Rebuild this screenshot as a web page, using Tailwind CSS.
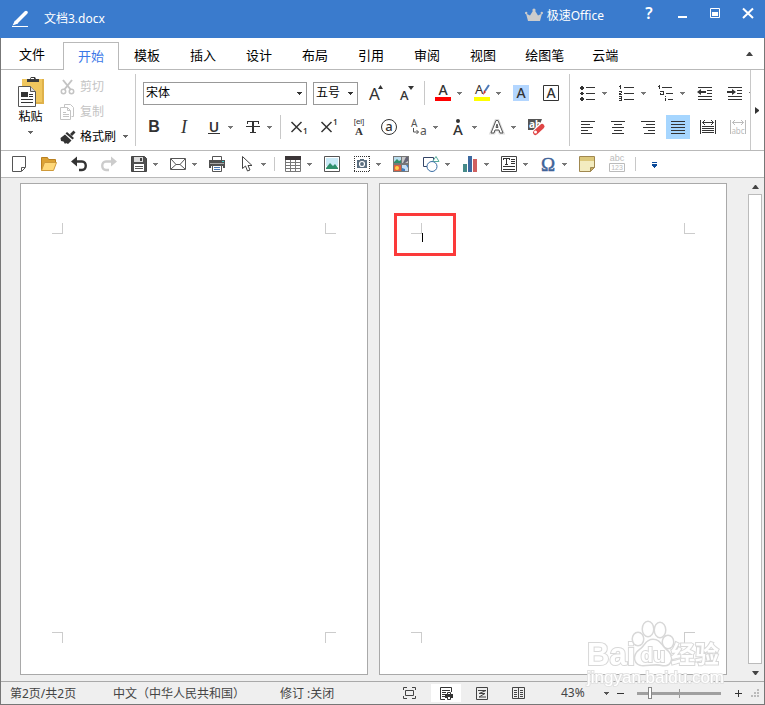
<!DOCTYPE html>
<html lang="zh-CN">

<head>
    <meta charset="UTF-8">
    <meta name="viewport" content="width=device-width, initial-scale=1.0">
    <title>文档3.docx</title>
    <script src="https://cdn.jsdelivr.net/npm/@tailwindcss/browser@4"></script>
</head>

<body class="font-['Noto_Sans','Noto_Sans_CJK_SC',sans-serif] text-xs text-[#333]">
    <!-- shared shapes -->
    <svg class="hidden">
        <symbol id="caret" viewBox="0 0 5 3"><path d="M0 0h5v1H4v1H3v1H2V2H1V1H0z" fill="currentColor" /></symbol>
    </svg>

    <div class="flex flex-col h-screen bg-[#efefef]">
        <!-- title bar -->
        <header class="flex items-center h-[38px] shrink-0 bg-[#3a7bcd] text-white pl-3 pr-[5px]">
            <svg class="w-4 h-[18px]" viewBox="0 0 16 18"><path d="M14 2.500L4.500 12" stroke="#fff" stroke-width="3.500" stroke-linecap="round" /><path d="M3 10.500l3 3L.500 15.500z" fill="#fff" /><path d="M0 16h16v1H0z" fill="#fff" /></svg>
            <h1 class="ml-4 grow">文档3.docx</h1>
            <svg class="w-[18px] h-[14px] mb-2" viewBox="0 0 18 14"><path d="M3 13L1 5.500l4 2L8.500 2h1L13 7.500l4-2L15 13z" fill="#ccc" /><g fill="#ccc"><circle cx="1.200" cy="5" r="1.200" /><circle cx="9" cy="2" r="1.600" /><circle cx="16.800" cy="5" r="1.200" /></g></svg>
            <span class="ml-1 mb-1.5">极速Office</span>
            <div class="flex items-center gap-[9px] ml-[33px] mb-3">
                <button class="w-6 h-6 text-base font-semibold" aria-label="帮助">?</button>
                <button class="w-6 h-6" aria-label="最小化"><svg class="w-6 h-6" viewBox="0 0 24 24"><path d="M8 15h9v2H8z" fill="#fff" /></svg></button>
                <button class="w-6 h-6" aria-label="最大化"><svg class="w-6 h-6" viewBox="0 0 24 24"><path d="M7.500 7.500h9v9h-9z" fill="none" stroke="#fff" /><path d="M9 11h6v4H9z" fill="#fff" /></svg></button>
                <button class="w-6 h-6" aria-label="关闭"><svg class="w-6 h-6" viewBox="0 0 24 24"><path d="M7 7.500l10 9.500M17 7.500L7 17" stroke="#fff" stroke-width="2" /></svg></button>
            </div>
        </header>

        <div class="flex flex-col grow min-h-0 border-x border-b border-[#777]">
            <!-- tabs -->
            <nav class="flex h-8 shrink-0 bg-white text-[13px] text-black">
                <button class="w-[62px] pt-0.5 border-b border-[#b9b9b9]">文件</button>
                <button class="px-[14px] mt-1 border border-b-0 border-[#b9b9b9] text-[#3b78e7]">开始</button>
                <button class="px-[15px] pt-1 border-b border-[#b9b9b9]">模板</button>
                <button class="px-[15px] pt-1 border-b border-[#b9b9b9]">插入</button>
                <button class="px-[15px] pt-1 border-b border-[#b9b9b9]">设计</button>
                <button class="px-[15px] pt-1 border-b border-[#b9b9b9]">布局</button>
                <button class="px-[15px] pt-1 border-b border-[#b9b9b9]">引用</button>
                <button class="px-[15px] pt-1 border-b border-[#b9b9b9]">审阅</button>
                <button class="px-[15px] pt-1 border-b border-[#b9b9b9]">视图</button>
                <button class="px-[14px] pt-1 border-b border-[#b9b9b9]">绘图笔</button>
                <button class="px-[14px] pt-1 border-b border-[#b9b9b9]">云端</button>
                <div class="grow flex justify-end items-center pr-[11px] border-b border-[#b9b9b9]">
                    <button aria-label="折叠功能区"><svg class="w-[7px] h-1" viewBox="0 0 7 4"><path d="M0 4l3-4h1l3 4z" fill="#444" /></svg></button>
                </div>
            </nav>

            <!-- ribbon -->
            <section class="flex h-[81px] shrink-0 bg-white border-b border-[#b9b9b9]">
                <div class="flex w-[134px] shrink-0 pt-1 text-black">
                    <button class="flex flex-col items-center w-[59px] pt-[3px]">
                        <svg class="w-[26px] h-[30px]" viewBox="0 0 26 30"><path d="M4 2h22v25H4z" fill="#f0c75e" /><path d="M24 2h2v25h-8v-2h6z" fill="#dfb14a" /><path d="M9 5V2h3l1-2h4l1 2h3v3z" fill="#3b3b3b" /><path d="M13 1h3v1h-3z" fill="#fff" /><path d="M.500 9.500h12l5 5v15H.500z" fill="#fff" stroke="#555" /><path d="M12.500 9.500v5h5" fill="#ddd" stroke="#555" /><path d="M3 15h7v5H3zM3 22h12v1H3zM3 25h12v1H3zM11 17h4v1h-4zM11 19h4v1h-4z" fill="#333" /></svg>
                        <span class="leading-5">粘贴</span>
                        <svg class="w-[5px] h-[3px] mt-1 text-[#666]"><use href="#caret" /></svg>
                    </button>
                    <div class="flex flex-col">
                        <button class="flex items-center h-[25px] text-[#c4c4c4]">
                            <svg class="w-4 h-4 mr-1" viewBox="0 0 16 16" fill="none" stroke="#c4c4c4" stroke-width="2"><path d="M3 1l8 10M12 1L4 11" /><circle cx="3.500" cy="12.500" r="2.200" stroke-width="1.500" /><circle cx="11.500" cy="12.500" r="2.200" stroke-width="1.500" /></svg>剪切</button>
                        <button class="flex items-center h-[25px] text-[#c4c4c4]">
                            <svg class="w-4 h-4 mr-1" viewBox="0 0 16 16" fill="none" stroke="#c4c4c4"><path d="M4.500 3V.500h6l3 3v9h-2" /><path d="M.500 3.500h7l3 3v9H.500z" fill="#fff" /><path d="M7.500 3.500v3h3M3 8.500h3M3 10.500h6M3 12.500h6" /></svg>复制</button>
                        <button class="flex items-center h-[25px]">
                            <svg class="w-4 h-4 mr-1" viewBox="0 0 16 16" fill="#333"><path d="M10 5l3.500-3.500 2 2L12 7zM7 3l7 6-1.500 1.500L5.500 4.500zM5 5.500l6.500 6L8 15l-2-1-1 1-1.500-2.500L1 12 .500 9z" /></svg>格式刷
                            <svg class="w-[5px] h-[3px] ml-[7px] text-[#666]"><use href="#caret" /></svg></button>
                    </div>
                </div>

                <div class="w-px h-[72px] mt-1 bg-[#c8c8c8] shrink-0"></div>

                <!-- font -->
                <div class="flex flex-col gap-[10px] w-[433px] shrink-0 pt-[11px] pl-1.5 text-[#333]">
                    <div class="flex gap-1.5 items-center pl-px">
                        <div class="relative">
                            <select aria-label="字体" class="appearance-none block w-[164px] h-[23px] pl-0.5 border border-[#999] bg-white text-black"><option>宋体</option></select>
                            <svg class="absolute right-[5px] top-[10px] w-[5px] h-[3px] pointer-events-none"><use href="#caret" /></svg>
                        </div>
                        <div class="relative">
                            <select aria-label="字号" class="appearance-none block w-[45px] h-[23px] pl-0.5 border border-[#999] bg-white text-black"><option>五号</option></select>
                            <svg class="absolute right-[5px] top-[10px] w-[5px] h-[3px] pointer-events-none"><use href="#caret" /></svg>
                        </div>
                        <button class="w-6 h-6" aria-label="增大字号"><svg class="w-6 h-6" viewBox="0 0 24 24" fill="#333"><text x="5" y="19" font-size="17">A</text><path d="M14 8l2.500-4L19 8z" /></svg></button>
                        <button class="w-6 h-6" aria-label="减小字号"><svg class="w-6 h-6" viewBox="0 0 24 24" fill="#333"><text x="6" y="19" font-size="13" font-weight="500">A</text><path d="M14 5h6l-3 4z" /></svg></button>
                        <div class="w-px h-6 bg-[#c8c8c8]"></div>
                        <button class="flex items-center" aria-label="字体颜色"><svg class="w-6 h-6" viewBox="0 0 24 24" fill="#333"><text x="12" y="14" font-size="14" font-weight="500" text-anchor="middle">A</text><path d="M4 16h16v4H4z" fill="#f00" /></svg><svg class="w-[5px] h-[3px] mx-0.5 text-[#777]"><use href="#caret" /></svg></button>
                        <button class="flex items-center" aria-label="突出显示"><svg class="w-6 h-6" viewBox="0 0 24 24" fill="#333"><text x="5" y="13" font-size="13">A</text><path d="M19 4l-4 6" stroke="#4a78b8" stroke-width="2" /><path d="M14 9l2 2-3 3z" fill="#c33" /><path d="M4 16h16v4H4z" fill="#ff0" /></svg><svg class="w-[5px] h-[3px] mx-0.5 text-[#777]"><use href="#caret" /></svg></button>
                        <button class="w-6 h-6" aria-label="字符底纹"><svg class="w-6 h-6" viewBox="0 0 24 24" fill="#333"><path d="M4 4h16v16H4z" fill="#b3d6ff" /><text x="12" y="17" font-size="14" font-weight="500" text-anchor="middle">A</text></svg></button>
                        <button class="w-6 h-6" aria-label="字符边框"><svg class="w-6 h-6" viewBox="0 0 24 24" fill="#333"><path d="M4.500 4.500h15v15h-15z" fill="none" stroke="#333" /><text x="12" y="17" font-size="14" font-weight="500" text-anchor="middle">A</text></svg></button>
                    </div>
                    <div class="flex gap-1.5 items-center">
                        <button class="w-6 h-6 font-['Liberation_Sans',sans-serif] text-base leading-6 font-bold" aria-label="加粗">B</button>
                        <button class="w-6 h-6 font-['Liberation_Serif',serif] text-lg leading-6 italic" aria-label="倾斜">I</button>
                        <button class="flex items-center" aria-label="下划线"><svg class="w-6 h-6" viewBox="0 0 24 24" fill="#333"><text x="12" y="17" font-size="14" font-weight="600" text-anchor="middle">U</text><path d="M6 18h12v1H6z" /></svg><svg class="w-[5px] h-[3px] mx-0.5 text-[#777]"><use href="#caret" /></svg></button>
                        <button class="flex items-center" aria-label="删除线"><svg class="w-6 h-6" viewBox="0 0 24 24" fill="#333"><path d="M6 6h12v3h-1V7h-4v10h2v1H9v-1h2V7H7v2H6zM5 11h14v1H5z" /></svg><svg class="w-[5px] h-[3px] mx-0.5 text-[#777]"><use href="#caret" /></svg></button>
                        <div class="w-px h-6 bg-[#c8c8c8]"></div>
                        <button class="w-6 h-6" aria-label="下标"><svg class="w-6 h-6" viewBox="0 0 24 24" fill="#333"><path d="M4.500 7l10 10M14.500 7l-10 10" stroke="#333" stroke-width="1.500" /><text x="16" y="19" font-size="8" font-weight="600">1</text></svg></button>
                        <button class="w-6 h-6" aria-label="上标"><svg class="w-6 h-6" viewBox="0 0 24 24" fill="#333"><path d="M4.500 7l10 10M14.500 7l-10 10" stroke="#333" stroke-width="1.500" /><text x="16" y="10" font-size="8" font-weight="600">1</text></svg></button>
                        <button class="w-6 h-6" aria-label="拼音指南"><svg class="w-6 h-6" viewBox="0 0 24 24" fill="#333"><text x="12" y="9" font-size="8" text-anchor="middle" font-family="Liberation Sans">[ei]</text><text x="12" y="20" font-size="11" font-weight="bold" font-family="Liberation Serif" text-anchor="middle">A</text></svg></button>
                        <button class="w-6 h-6" aria-label="带圈字符"><svg class="w-6 h-6" viewBox="0 0 24 24" fill="#333"><circle cx="12" cy="12" r="7.500" fill="none" stroke="#333" /><text x="12" y="16" font-size="13" font-weight="500" text-anchor="middle">a</text></svg></button>
                        <button class="flex items-center" aria-label="更改大小写"><svg class="w-6 h-6" viewBox="0 0 24 24" fill="#555"><text x="4" y="12" font-size="10">A</text><text x="13" y="20" font-size="12">a</text><path d="M6.500 13v4h5M9.500 15l2 2-2 2" fill="none" stroke="#555" /></svg><svg class="w-[5px] h-[3px] mx-0.5 text-[#777]"><use href="#caret" /></svg></button>
                        <button class="flex items-center" aria-label="着重号"><svg class="w-6 h-6" viewBox="0 0 24 24" fill="#333"><circle cx="12" cy="6" r="2" /><text x="12" y="20" font-size="15" font-weight="500" text-anchor="middle">A</text></svg><svg class="w-[5px] h-[3px] mx-0.5 text-[#777]"><use href="#caret" /></svg></button>
                        <button class="flex items-center" aria-label="文本效果"><svg class="w-6 h-6" viewBox="0 0 24 24"><path d="M6 18l5-12.500h2L18 18h-3l-1-3h-4l-1 3zM11 12.500h2L12 9z" fill="#fff" stroke="#ddd" stroke-width="3" /><path d="M6 18l5-12.500h2L18 18h-3l-1-3h-4l-1 3zM11 12.500h2L12 9z" fill="#fff" stroke="#555" /></svg><svg class="w-[5px] h-[3px] mx-0.5 text-[#777]"><use href="#caret" /></svg></button>
                        <button class="w-6 h-6" aria-label="清除格式"><svg class="w-6 h-6" viewBox="0 0 24 24"><path d="M4 4h14l-2 5-6 6H4z" fill="#555" /><text x="5" y="13" font-size="10" font-weight="bold" fill="#fff">ab</text><path d="M11.500 17.500l6-6" stroke="#fff" stroke-width="7" stroke-linecap="round" /><path d="M11.500 17.500l6.500-6" stroke="#e04545" stroke-width="5" stroke-linecap="round" /><circle cx="11.500" cy="17" r="1.500" fill="#fff" /></svg></button>
                    </div>
                </div>

                <div class="w-px h-[72px] mt-1 bg-[#c8c8c8] shrink-0"></div>

                <!-- paragraph -->
                <div class="flex flex-col gap-[10px] grow min-w-0 overflow-hidden pt-[11px] pl-1.5 text-[#333]">
                    <div class="flex gap-1.5 items-center">
                        <button class="flex items-center" aria-label="项目符号"><svg class="w-6 h-6" viewBox="0 0 24 24" fill="#333"><path d="M5 5h2v1h1v2H7v1H5V8H4V6h1zM5 11h2v1h1v1H7v1H5v-1H4v-1h1zM5 16h2v1h1v2H7v1H5v-1H4v-2h1zM10 6h9v1h-9zM10 12h9v1h-9zM10 18h9v1h-9z" /></svg><svg class="w-[5px] h-[3px] mx-0.5 text-[#777] shrink-0"><use href="#caret" /></svg></button>
                        <button class="flex items-center" aria-label="编号"><svg class="w-6 h-6" viewBox="0 0 24 24" fill="#333"><path d="M9 6h10v1H9zM9 12h10v1H9zM9 18h10v1H9zM5 4h1v4H5zM4 5h1v1H4zM4 10h3v2H6v1h1v1H4v-2h2v-1H4zM4 15h3v5H4v-1h2v-1H4v-1h2v-1H4z" /></svg><svg class="w-[5px] h-[3px] mx-0.5 text-[#777] shrink-0"><use href="#caret" /></svg></button>
                        <button class="flex items-center" aria-label="多级列表"><svg class="w-6 h-6" viewBox="0 0 24 24" fill="#333"><path d="M5 4h1v4H5zM4 5h1v1H4zM8 6h10v1H8zM6 10h4v4H6v-2h3v-1H6zM7 12v1h2v-1zM12 12h7v1h-7zM11 15h1v1h-1zM11 17h1v3h-1zM14 18h5v1h-5z" /></svg><svg class="w-[5px] h-[3px] mx-0.5 text-[#777] shrink-0"><use href="#caret" /></svg></button>
                        <button class="w-6 h-6 shrink-0" aria-label="减少缩进"><svg class="w-6 h-6" viewBox="0 0 24 24" fill="#333"><path d="M5 6h14v1H5zM14 9h5v1h-5zM14 12h5v1h-5zM5 15h14v1H5zM5 18h14v1H5zM4 11l4-3v2h5v2H8v2z" /></svg></button>
                        <button class="flex items-center shrink-0" aria-label="增加缩进"><svg class="w-6 h-6" viewBox="0 0 24 24" fill="#333"><path d="M5 6h14v1H5zM14 9h5v1h-5zM14 12h5v1h-5zM5 15h14v1H5zM5 18h14v1H5zM13 11L9 8v2H4v2h5v2z" /></svg><svg class="w-[5px] h-[3px] mx-0.5 text-[#777] shrink-0"><use href="#caret" /></svg></button>
                    </div>
                    <div class="flex gap-1.5 items-center">
                        <button class="w-6 h-6 shrink-0" aria-label="左对齐"><svg class="w-6 h-6" viewBox="0 0 24 24"><path d="M5 6h14v1H5zM5 9h9v1H5zM5 12h12v1H5zM5 15h7v1H5zM5 18h11v1H5z" fill="#333" /></svg></button>
                        <button class="w-6 h-6 shrink-0" aria-label="居中"><svg class="w-6 h-6" viewBox="0 0 24 24"><path d="M5 6h14v1H5zM8 9h8v1H8zM6 12h12v1H6zM8 15h8v1H8zM6 18h12v1H6z" fill="#333" /></svg></button>
                        <button class="w-6 h-6 shrink-0" aria-label="右对齐"><svg class="w-6 h-6" viewBox="0 0 24 24"><path d="M5 6h14v1H5zM10 9h9v1h-9zM7 12h12v1H7zM12 15h7v1h-7zM8 18h11v1H8z" fill="#333" /></svg></button>
                        <button class="w-6 h-6 shrink-0 bg-[#a6d6ff]" aria-label="两端对齐" aria-pressed="true"><svg class="w-6 h-6" viewBox="0 0 24 24"><path d="M5 6h14v1H5zM5 9h14v1H5zM5 12h14v1H5zM5 15h14v1H5zM5 18h14v1H5z" fill="#333" /></svg></button>
                        <button class="w-6 h-6 shrink-0" aria-label="分散对齐"><svg class="w-6 h-6" viewBox="0 0 24 24" fill="#333"><path d="M4 5h1v14H4zM19 5h1v14h-1zM6 11h12v1H6zM6 13h12v1H6zM6 15h12v1H6zM6 17h12v1H6z" /><path d="M6.500 7.500h11M9 5L6.500 7.500 9 10M15 5l2.500 2.500L15 10" fill="none" stroke="#333" /></svg></button>
                        <button class="w-6 h-6 shrink-0" aria-label="字符缩放"><svg class="w-6 h-6" viewBox="0 0 24 24" fill="#bbb"><path d="M4 5h1v14H4zM19 5h1v14h-1z" /><path d="M6.500 7.500h11M9 5L6.500 7.500 9 10M15 5l2.500 2.500L15 10" fill="none" stroke="#bbb" /><text x="12" y="19" font-size="8" text-anchor="middle">abc</text></svg></button>
                    </div>
                </div>
                <button class="flex items-center w-[14px] shrink-0 pl-1 border-l border-[#c8c8c8]" aria-label="向右滚动"><svg class="w-[5px] h-[7px]" viewBox="0 0 5 7"><path d="M0 0v7l4-3V3z" fill="#333" /></svg></button>
            </section>

            <!-- quick access -->
            <section class="flex gap-1.5 items-center h-[27px] shrink-0 pl-1.5 bg-white border-b border-[#b9b9b9] text-[#777]">
                <button class="w-6 h-6" aria-label="新建"><svg class="w-6 h-6" viewBox="0 0 24 24"><path d="M5.500 4.500h13v11l-4 4h-9z" fill="#fff" stroke="#555" /><path d="M18 15.500h-3.500V19" fill="none" stroke="#555" /></svg></button>
                <button class="w-6 h-6" aria-label="打开"><svg class="w-6 h-6" viewBox="0 0 24 24"><path d="M4.500 18.500v-13h6l1 2h7v3" fill="#dca234" stroke="#b98020" /><path d="M4.500 18.500l3-8h12l-3 8z" fill="#ffd97a" stroke="#cf9a3a" /></svg></button>
                <button class="w-6 h-6" aria-label="撤销"><svg class="w-6 h-6" viewBox="0 0 24 24"><path d="M7 9.500h8c5 0 5 8.500 0 8.500h-3" fill="none" stroke="#333" stroke-width="2.400" /><path d="M4 9.500l6-5v10z" fill="#333" /></svg></button>
                <button class="w-6 h-6" aria-label="恢复"><svg class="w-6 h-6" viewBox="0 0 24 24"><path d="M17 9.500H9c-5 0-5 8.500 0 8.500h3" fill="none" stroke="#ccc" stroke-width="2.400" /><path d="M20 9.500l-6-5v10z" fill="#ccc" /></svg></button>
                <button class="flex items-center" aria-label="保存"><svg class="w-6 h-6" viewBox="0 0 24 24"><path d="M4.500 4.500h13l2 2v13h-15z" fill="#505050" stroke="#444" /><path d="M7 5h9v5H7z" fill="#ddd" /><path d="M13 6h2v3h-2z" fill="#444" /><path d="M7 12h10v7H7z" fill="#fff" /><path d="M8 14h8v1H8zM8 16h8v1H8z" fill="#555" /></svg><svg class="w-[5px] h-[3px] mx-0.5"><use href="#caret" /></svg></button>
                <button class="flex items-center" aria-label="邮件"><svg class="w-6 h-6" viewBox="0 0 24 24" fill="none" stroke="#555"><path d="M4.500 6.500h15v11h-15zM5 7l5 5.500h4L19 7M5 17l5-4.500M19 17l-5-4.500" /></svg><svg class="w-[5px] h-[3px] mx-0.5"><use href="#caret" /></svg></button>
                <button class="w-6 h-6" aria-label="打印"><svg class="w-6 h-6" viewBox="0 0 24 24"><path d="M7.500 4.500h9v4h-9z" fill="#fff" stroke="#555" /><path d="M4 8h16v8h-2v-2H6v2H4z" fill="#505050" /><path d="M5 11h14v1H5z" fill="#aaa" /><path d="M17 9h2v1h-2z" fill="#3cc" /><path d="M7.500 13.500h9v6h-9z" fill="#fff" stroke="#555" /><path d="M9 15h6v1H9zM9 17h6v1H9z" fill="#4a7ab8" /></svg></button>
                <button class="flex items-center" aria-label="选择"><svg class="w-6 h-6" viewBox="0 0 24 24"><path d="M7.500 4.500v12l3-2.500 2 5 2.500-1-2-4.500h4z" fill="#fff" stroke="#444" /></svg><svg class="w-[5px] h-[3px] mx-0.5"><use href="#caret" /></svg></button>
                <div class="w-px h-3.5 bg-[#c8c8c8]"></div>
                <button class="flex items-center" aria-label="表格"><svg class="w-6 h-6" viewBox="0 0 24 24"><path d="M4.500 4.500h15v15h-15zM9.500 8v11M14.500 8v11M5 10.500h14M5 13.500h14M5 16.500h14" fill="none" stroke="#777" /><path d="M4 4h16v4H4z" fill="#3b3537" /></svg><svg class="w-[5px] h-[3px] mx-0.5"><use href="#caret" /></svg></button>
                <button class="w-6 h-6" aria-label="图片"><svg class="w-6 h-6" viewBox="0 0 24 24"><path d="M4.500 4.500h15v15h-15z" fill="#fff" stroke="#555" /><path d="M6 6h12v8H6z" fill="#c9e9f6" /><path d="M6 16l4-5 3 3 2-2 3 4v1H6z" fill="#2e8f6c" /></svg></button>
                <button class="flex items-center" aria-label="屏幕截图"><svg class="w-6 h-6" viewBox="0 0 24 24"><path d="M4 4.500h16M4 19.500h16M4.500 4v16M19.500 4v16" fill="none" stroke="#333" stroke-dasharray="1 1" /><path d="M7 8h3V7h4v1h3v8H7z" fill="#5c6f80" /><circle cx="12" cy="12" r="2.500" fill="#5c6f80" stroke="#fff" stroke-width="1.200" /></svg><svg class="w-[5px] h-[3px] mx-0.5"><use href="#caret" /></svg></button>
                <button class="w-6 h-6" aria-label="剪贴画"><svg class="w-6 h-6" viewBox="0 0 24 24"><path d="M4 4h16v16H4z" fill="#777" /><path d="M5 5h7v6H5z" fill="#bde" /><path d="M5 10l3-3 2 2 2-1v3H5z" fill="#2e8f6c" /><path d="M13 5h6v6h-6z" fill="#c9c9c9" /><path d="M17 5h2v4l-3 2h-2z" fill="#667" /><path d="M5 13h7v6H5z" fill="#e0603f" /><circle cx="8" cy="16" r="2" fill="#ffd34a" /><path d="M13 13h6v6h-6z" fill="#c4ddf5" /><path d="M13 16l3 1v2h-3zM17 13h2v3z" fill="#3f7cc0" /></svg></button>
                <button class="flex items-center" aria-label="形状"><svg class="w-6 h-6" viewBox="0 0 24 24"><path d="M4.500 5.500h10v9h-10z" fill="#fff" stroke="#346" /><path d="M13.500 9.500l3.500-5 3 5z" fill="#fff" stroke="#5a9" /><circle cx="13" cy="14.500" r="5" fill="#fff" stroke="#3a6ea5" /></svg><svg class="w-[5px] h-[3px] mx-0.5"><use href="#caret" /></svg></button>
                <button class="flex items-center" aria-label="图表"><svg class="w-6 h-6" viewBox="0 0 24 24"><path d="M5 12h4v8H5z" fill="#458a88" /><path d="M10 4h4v16h-4z" fill="#3c69a0" /><path d="M15 7h4v13h-4z" fill="#cf6060" /></svg><svg class="w-[5px] h-[3px] mx-0.5"><use href="#caret" /></svg></button>
                <button class="flex items-center" aria-label="文本框"><svg class="w-6 h-6" viewBox="0 0 24 24"><path d="M4.500 4.500h15v15h-15z" fill="#fff" stroke="#444" /><path d="M6 6h7v2h-1V7h-2v5h1v1H8v-1h1V7H7v1H6zM14 7h4v1h-4zM14 9h4v1h-4zM14 11h4v1h-4zM6 14h12v1H6zM6 17h12v1H6z" fill="#333" /></svg><svg class="w-[5px] h-[3px] mx-0.5"><use href="#caret" /></svg></button>
                <button class="flex items-center" aria-label="符号"><svg class="w-6 h-6" viewBox="0 0 24 24"><text x="12" y="19" font-size="19" font-family="Liberation Serif" text-anchor="middle" fill="#3f6398" stroke="#3f6398" stroke-width="0.500">Ω</text></svg><svg class="w-[5px] h-[3px] mx-0.5"><use href="#caret" /></svg></button>
                <button class="w-6 h-6" aria-label="批注"><svg class="w-6 h-6" viewBox="0 0 24 24"><path d="M4.500 4.500h15v11l-4 4h-11z" fill="#f3ecc0" stroke="#a08850" /><path d="M5 5h14v4H5z" fill="#dcc87c" /><path d="M19.500 15.500h-4v4z" fill="#c4ab62" stroke="#a08850" /></svg></button>
                <button class="w-6 h-6" aria-label="字数统计"><svg class="w-6 h-6" viewBox="0 0 24 24" fill="#bbb" font-family="Liberation Sans"><text x="12" y="9" font-size="9" text-anchor="middle">abc</text><path d="M4.500 11.500h15v8h-15z" fill="none" stroke="#bbb" /><text x="12" y="18" font-size="7" text-anchor="middle">123</text></svg></button>
                <div class="w-px h-3.5 bg-[#c8c8c8]"></div>
                <button class="w-6 h-6" aria-label="自定义"><svg class="w-6 h-6" viewBox="0 0 24 24"><path d="M10 10h5v1h-5zM10 12h5v2h-1v1h-1v1h-1v-1h-1v-1h-1z" fill="#0a4a9a" /></svg></button>
            </section>

            <!-- pages -->
            <main class="flex grow min-h-0">
                <div class="flex grow gap-[11px] pt-[5px] pb-1.5 pl-[19px] pr-[21px]">
                    <article class="flex flex-col justify-between basis-0 grow px-[31px] pt-[39px] pb-[31px] bg-white border border-[#a9a9a9]">
                        <div class="flex justify-between">
                            <i class="size-[11px] border-r border-b border-[#ccc]"></i>
                            <i class="size-[11px] border-l border-b border-[#ccc]"></i>
                        </div>
                        <div class="flex justify-between">
                            <i class="size-[11px] border-r border-t border-[#ccc]"></i>
                            <i class="size-[11px] border-l border-t border-[#ccc]"></i>
                        </div>
                    </article>
                    <article class="relative flex flex-col justify-between basis-0 grow px-[31px] pt-[39px] pb-[31px] bg-white border border-[#a9a9a9]">
                        <div class="flex justify-between">
                            <i class="size-[11px] border-r border-b border-[#ccc]"></i>
                            <i class="size-[11px] border-l border-b border-[#ccc]"></i>
                        </div>
                        <div class="flex justify-between">
                            <i class="size-[11px] border-r border-t border-[#ccc]"></i>
                            <i class="size-[11px] border-l border-t border-[#ccc]"></i>
                        </div>
                        <!-- text cursor and highlight frame -->
                        <div class="absolute left-[42px] top-[49px] w-px h-[9px] bg-black"></div>
                        <div class="absolute left-[14px] top-[29px] w-[62px] h-[43px] border-3 border-[#fb3a3a]"></div>
                    </article>
                </div>
                <div class="flex flex-col items-center w-[14px] mr-0.5 shrink-0">
                    <button class="flex items-center h-4 pt-0.5 shrink-0" aria-label="向上滚动"><svg class="w-[7px] h-1" viewBox="0 0 7 4"><path d="M0 4l3-4h1l3 4z" fill="#444" /></svg></button>
                    <div class="grow w-full bg-white border border-[#bbb]"></div>
                    <button class="flex items-center h-[17px] shrink-0" aria-label="向下滚动"><svg class="w-[7px] h-1" viewBox="0 0 7 4"><path d="M0 0l3 4h1l3-4z" fill="#444" /></svg></button>
                </div>
            </main>

            <!-- status bar -->
            <footer class="flex items-center h-[23px] shrink-0 border-t border-[#a9a9a9] pl-[9px] text-[#444]">
                <span class="w-[103px] pt-px">第2页/共2页</span>
                <span class="w-[167px] pt-px">中文（中华人民共和国）</span>
                <span class="grow pt-px">修订 :关闭</span>
                <div class="flex gap-[6px] mr-7">
                    <button class="w-[30px] h-[18px]" aria-label="全屏"><svg class="w-[30px] h-[18px]" viewBox="0 0 30 18" fill="none" stroke="#444"><path d="M8.500 6V3.500H12M17 3.500h3.500V6M8.500 12v2.500H12M17 14.500h3.500V12M10.500 6.500h8v5h-8z" /></svg></button>
                    <button class="w-[30px] h-[18px] bg-white" aria-label="页面视图"><svg class="w-[30px] h-[18px]" viewBox="0 0 30 18" fill="none" stroke="#333"><path d="M14 15.500H9.500v-12h11V8M11 6.500h8M11 8.500h4M11 10.500h3M11 12.500h3" /><path d="M14 10h8v4h-8z" fill="#333" stroke="none" /><path d="M16.500 8.500h3v2h-3zM16.500 12.500h3v3h-3z" fill="#fff" /></svg></button>
                    <button class="w-[30px] h-[18px]" aria-label="普通视图"><svg class="w-[30px] h-[18px]" viewBox="0 0 30 18" fill="none" stroke="#444"><path d="M9.500 3.500h11v12h-11z" /><path d="M11 6.500h8l-7 3h6l-6 3.500h7" /></svg></button>
                    <button class="w-[30px] h-[18px]" aria-label="阅读视图"><svg class="w-[30px] h-[18px]" viewBox="0 0 30 18" fill="none" stroke="#444"><path d="M9.500 3.500h12v11h-12zM15.500 4v11M11 6.500h3M11 8.500h3M11 10.500h3M11 12.500h3M17 6.500h3M17 8.500h3M17 10.500h3M17 12.500h3" /></svg></button>
                </div>
                <button class="flex items-center w-12 justify-between">43%<svg class="w-[5px] h-[3px] text-[#555]"><use href="#caret" /></svg></button>
                <button class="w-6 h-5" aria-label="缩小"><svg class="w-6 h-5" viewBox="0 0 24 20"><path d="M8 10h7v1H8z" fill="#333" /></svg></button>
                <div class="relative flex items-center w-[84px] ml-1">
                    <div class="absolute left-[42px] w-px h-[9px] bg-[#999]"></div>
                    <input type="range" min="0" max="100" value="14" aria-label="显示比例" class="relative appearance-none w-full h-[3px] bg-[#a0a0a0] [&::-webkit-slider-thumb]:appearance-none [&::-webkit-slider-thumb]:w-1 [&::-webkit-slider-thumb]:h-3 [&::-webkit-slider-thumb]:bg-white [&::-webkit-slider-thumb]:border [&::-webkit-slider-thumb]:border-[#888]">
                </div>
                <button class="w-6 h-5 ml-1.5" aria-label="放大"><svg class="w-6 h-5" viewBox="0 0 24 20"><path d="M8 10h7v1H8zM11 7h1v7h-1z" fill="#333" /></svg></button>
                <svg class="w-[9px] h-[9px] mr-1" viewBox="0 0 9 9"><path d="M6 0h2v2H6zM3 3h2v2H3zM6 3h2v2H6zM0 6h2v2H0zM3 6h2v2H3zM6 6h2v2H6z" fill="#bbb" /></svg>
            </footer>
        </div>
    </div>

    <!-- watermark -->
    <svg class="fixed right-[40px] bottom-[14px] w-[142px] h-[72px] pointer-events-none" viewBox="0 0 142 72" fill="#fff" stroke="#d8d8d8" stroke-width="2" paint-order="stroke" font-weight="bold">
        <text x="4" y="46" font-size="31" font-family="Liberation Sans">Bai</text>
        <g stroke-width="3">
            <ellipse cx="55" cy="20" rx="5" ry="6" />
            <ellipse cx="65" cy="10" rx="5" ry="7" />
            <ellipse cx="77" cy="11" rx="5" ry="7" />
            <ellipse cx="85" cy="23" rx="5" ry="6" />
            <path d="M70 21c-7 0-8 7-13 10-8 6-5 15 3 15 7 0 13-2 20 0 8 1 11-8 4-14-6-5-7-11-14-11z" />
        </g>
        <text x="70" y="43" font-size="20" font-family="Liberation Sans" text-anchor="middle">du</text>
        <text x="88" y="44" font-size="24" font-family="Noto Sans CJK SC">经验</text>
        <text x="4" y="64" font-size="17" font-weight="normal" font-family="Liberation Sans" stroke="#e2e2e2">jingyan.baidu.com</text>
    </svg>
</body>

</html>
